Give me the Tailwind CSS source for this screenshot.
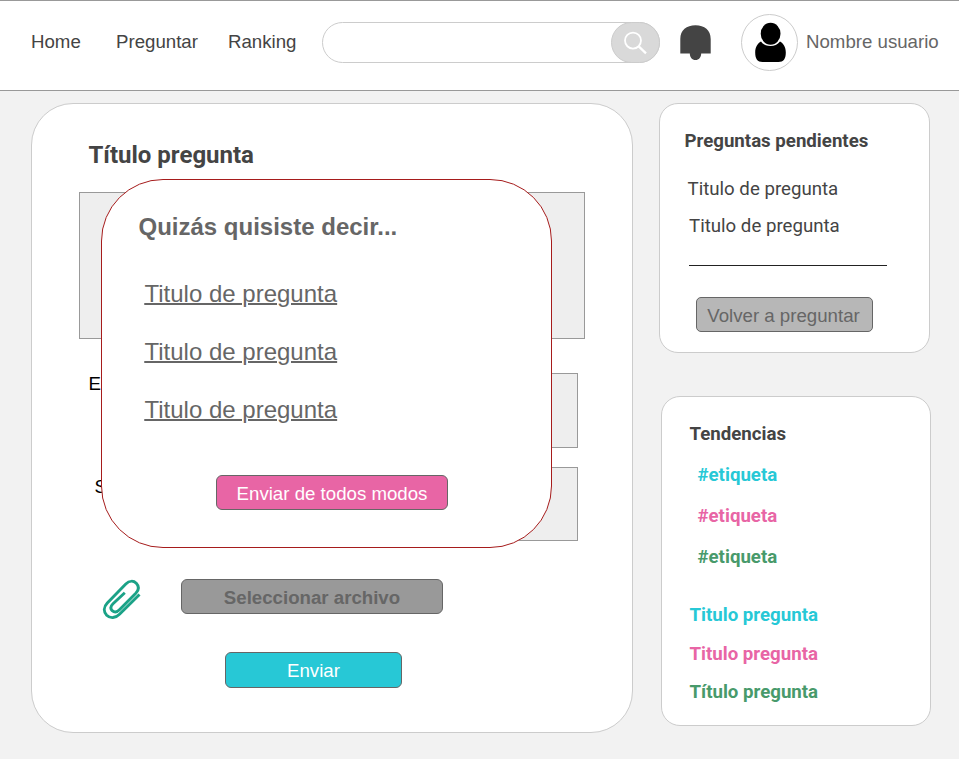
<!DOCTYPE html>
<html lang="es">
<head>
<meta charset="utf-8">
<title>Preguntar</title>
<script src="https://cdn.jsdelivr.net/npm/@tailwindcss/browser@4"></script>
</head>
<body class="w-[959px] h-[760px] overflow-hidden bg-[#f2f2f2] font-['Liberation_Sans',Arial,sans-serif] text-[18.67px] leading-[22px] text-[#444]">
<header class="flex items-start h-[91px] bg-white border-y border-[#999] whitespace-nowrap">
  <nav class="flex pt-[30px] pl-[31px] w-[322px] shrink-0">
    <a class="w-[85px]">Home</a>
    <a class="w-[112px]">Preguntar</a>
    <a>Ranking</a>
  </nav>
  <div class="mt-[21px] w-[338px] h-[41px] shrink-0 rounded-full border border-[#ccc] flex justify-end">
    <div class="-my-px -mr-px w-[49px] h-[41px] rounded-full bg-[#d9d9d9] border border-[#ccc]">
      <svg class="w-[47px] h-[39px]" viewBox="0 0 47 39" fill="none" stroke="#fff" stroke-width="1.8"><circle cx="21" cy="17.6" r="8"/><path d="M26.700 23.300l7.300 7" stroke-width="2.300"/></svg>
    </div>
  </div>
  <svg class="mt-[24px] ml-[20px] w-[31px] h-[36px] shrink-0" viewBox="0 0 31 36" fill="#444"><path d="M.3 28.500V14C.3 5 6.500 .3 15.500 .3S30.700 5 30.700 14V28.500H21.200C21 32.500 19 35 15.500 35S10 32.500 9.800 28.500Z"/></svg>
  <div class="mt-[13px] ml-[30px] w-[57px] h-[57px] shrink-0 rounded-full border border-[#ccc]">
    <svg class="w-[55px] h-[55px]" viewBox="0 0 55 55"><path d="M19 26.600C15.500 28.600 13.200 32.500 13.200 37.500C13.200 44 15.500 47 20.500 47H36.500C41.500 47 43.800 44 43.800 37.500C43.800 32.500 41.500 28.600 38 26.600C35.500 30 32.500 31 28.500 31S21.500 30 19 26.600Z"/><ellipse cx="28.600" cy="18.800" rx="9.900" ry="11"/></svg>
  </div>
  <span class="mt-[30px] ml-[8px] text-[#666]">Nombre usuario</span>
</header>
<main class="flex items-start pt-[12px] pl-[31px] h-[668px] border-b border-[#f2f2f2]">
  <section class="relative w-[602px] h-[630px] shrink-0 bg-white border border-[#ccc] rounded-[42px] pl-[47px]">
    <h1 class="pt-[37px] pl-[9.500px] h-[88px] font-['Roboto',sans-serif] font-bold text-[24px] leading-[28px]">Título pregunta</h1>
    <div class="w-[506px] h-[147px] bg-[#eee] border border-[#999]"></div>
    <div class="mt-[34px] w-[499px] h-[75px] flex justify-between text-black">
      <span class="pl-[9.500px]">E</span>
      <div class="w-[350px] bg-[#eee] border border-[#999]"></div>
    </div>
    <div class="mt-[19px] w-[499px] h-[74px] flex justify-between text-black">
      <span class="pl-[15.500px] pt-[9px]">S</span>
      <div class="w-[350px] bg-[#eee] border border-[#999]"></div>
    </div>
    <div class="mt-[38px] flex items-start">
      <svg class="ml-[23px] w-[40px] h-[41px]" viewBox="0 0 40 41" fill="none" stroke="#1ba287" stroke-width="2.900" stroke-linejoin="round"><path d="M37.500 15.500L17.500 35.200C13.500 39.300 8.300 39.700 4.700 36.200C1.400 32.700 1.500 28 5.300 24L23.800 5C27.300 1.600 31.500 1.500 34.300 4.300C37 7.200 36.900 11 33.800 14.300L17.700 30.600C15.200 33.200 12.300 33.600 10.200 31.700C8.200 29.700 8.500 27.200 11 24.700L22.800 13.700"/></svg>
      <button class="ml-[39px] w-[262px] h-[35px] pt-[2px] rounded-[6px] border border-[#666] bg-[#999] text-[#666] font-bold">Seleccionar archivo</button>
    </div>
    <button class="block mt-[32px] ml-[146px] w-[177px] h-[36px] pt-[2px] rounded-[6px] border border-[#666] bg-[#27c8d6] text-white">Enviar</button>

    <div role="dialog" class="absolute left-[69px] top-[75px] w-[451px] h-[369px] rounded-[62px] bg-white border border-[#a61c1c] text-[#666] text-[24px] leading-[28px]">
      <h2 class="pt-[33px] pl-[36.500px] font-bold">Quizás quisiste decir...</h2>
      <div class="pl-[42.500px] pt-[39px] flex flex-col gap-[30px] items-start underline decoration-[2px]">
        <a>Titulo de pregunta</a>
        <a>Titulo de pregunta</a>
        <a>Titulo de pregunta</a>
      </div>
      <button class="block mt-[51px] ml-[114px] w-[232px] h-[35px] pt-[2px] rounded-[6px] border border-[#666] bg-[#e865a5] text-white text-[18.67px] leading-[22px]">Enviar de todos modos</button>
    </div>
  </section>
  <aside class="pl-[26px] font-['Roboto',sans-serif]">
    <section class="w-[271px] h-[250px] bg-white border border-[#ccc] rounded-[19px]">
      <h2 class="pt-[26px] pl-[24.500px] font-bold">Preguntas pendientes</h2>
      <p class="pt-[26px] pl-[27.500px]">Titulo de pregunta</p>
      <p class="pt-[15px] pl-[29px]">Titulo de pregunta</p>
      <div class="mt-[28px] ml-[28.500px] w-[198px] h-px bg-[#222]"></div>
      <button class="block mt-[31px] ml-[36px] w-[177px] h-[35px] pt-[2px] pr-[2px] rounded-[5px] border border-[#666] bg-[#b7b7b7] text-[#666] font-['Liberation_Sans',Arial,sans-serif]">Volver a preguntar</button>
    </section>
    <section class="mt-[43px] ml-[2px] w-[270px] h-[330px] bg-white border border-[#ccc] rounded-[19px] font-bold">
      <h2 class="pt-[26px] pl-[27.500px]">Tendencias</h2>
      <div class="pt-[19px] pl-[35.500px] flex flex-col gap-[19px]">
        <a class="text-[#27c8d6]">#etiqueta</a>
        <a class="text-[#e865a5]">#etiqueta</a>
        <a class="text-[#489a6b]">#etiqueta</a>
      </div>
      <div class="pt-[36px] pl-[27.500px] flex flex-col gap-[17px]">
        <a class="text-[#27c8d6]">Titulo pregunta</a>
        <a class="text-[#e865a5]">Titulo pregunta</a>
        <a class="text-[#489a6b] -mt-px">Título pregunta</a>
      </div>
    </section>
  </aside>
</main>
<div class="h-px bg-white"></div>
</body>
</html>
